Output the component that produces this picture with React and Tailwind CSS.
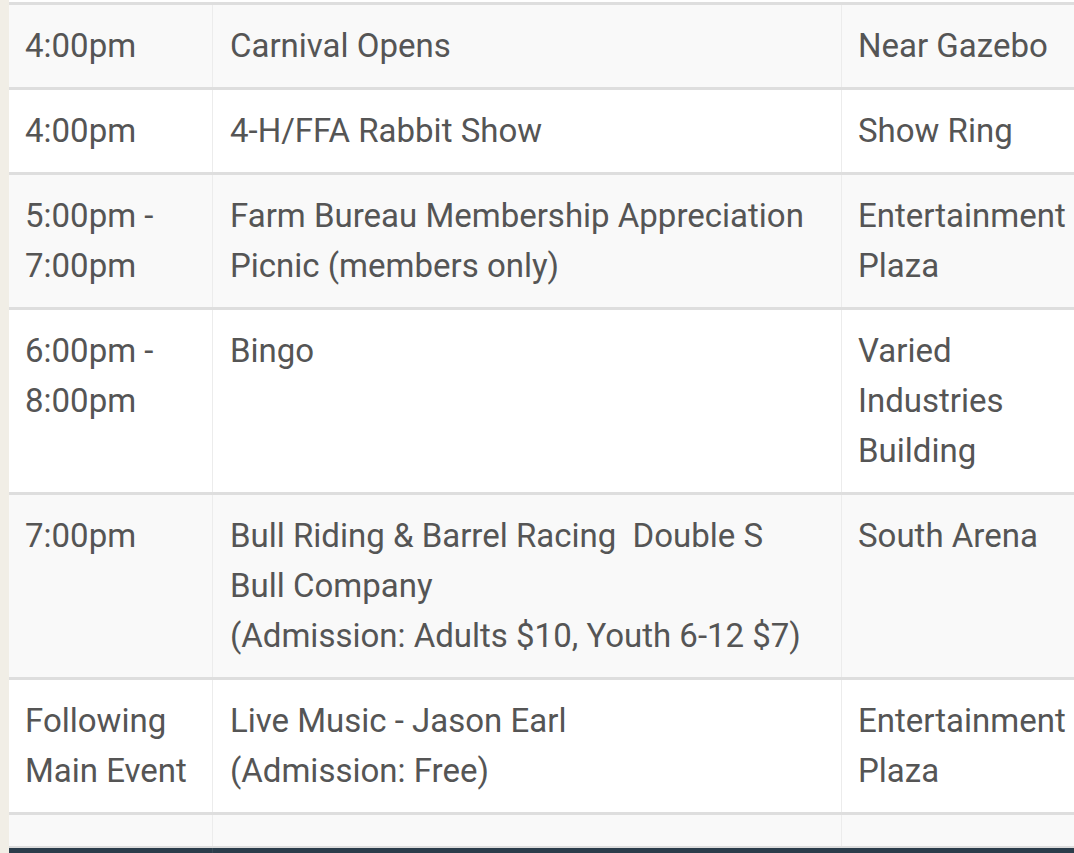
import React from "react";

const rows = [
  { t: ["4:00pm"], e: ["Carnival Opens"], l: ["Near Gazebo"] },
  { t: ["4:00pm"], e: ["4-H/FFA Rabbit Show"], l: ["Show Ring"] },
  { t: ["5:00pm -", "7:00pm"], e: ["Farm Bureau Membership Appreciation", "Picnic (members only)"], l: ["Entertainment", "Plaza"] },
  { t: ["6:00pm -", "8:00pm"], e: ["Bingo"], l: ["Varied", "Industries", "Building"] },
  { t: ["7:00pm"], e: ["Bull Riding & Barrel Racing  Double S", "Bull Company", "(Admission: Adults $10, Youth 6-12 $7)"], l: ["South Arena"] },
  { t: ["Following", "Main Event"], e: ["Live Music - Jason Earl", "(Admission: Free)"], l: ["Entertainment", "Plaza"] },
];

function Lines({ items }) {
  return (
    <>
      {items.map((s, i) => (
        <div key={i} className="whitespace-pre">{s}</div>
      ))}
    </>
  );
}

export default function App() {
  return (
    <div
      className="w-[1074px] h-[853px] overflow-hidden bg-[#f1eee6] flex"
      style={{ fontFamily: "Roboto, 'Liberation Sans', sans-serif" }}
    >
      <div className="w-[9px] shrink-0" />
      <div className="flex-1 min-w-0 flex flex-col bg-white text-[33px] leading-[50px] text-[#555555]">
        <div className="h-[2px] bg-white" />
        {rows.map((r, i) => (
          <div
            key={i}
            className={`grid grid-cols-[204px_629px_1fr] border-t-[3px] border-[#dedede] ${
              i % 2 === 0 ? "bg-[#f9f9f9]" : "bg-white"
            }`}
          >
            <div className="py-4 pl-[16px] border-r border-[#ececec]">
              <Lines items={r.t} />
            </div>
            <div className="py-4 pl-[17px] border-r border-[#ececec]">
              <Lines items={r.e} />
            </div>
            <div className="py-4 pl-[16px] whitespace-nowrap overflow-hidden">
              <Lines items={r.l} />
            </div>
          </div>
        ))}
        <div className="grid grid-cols-[204px_629px_1fr] border-t-[3px] border-[#dedede] bg-[#f9f9f9] h-[34px]">
          <div className="border-r border-[#ececec]" />
          <div className="border-r border-[#ececec]" />
          <div />
        </div>
        <div className="grid grid-cols-[204px_629px_1fr] border-t-[2px] border-[#dcdcdc] bg-[#2b3d4b] flex-1">
          <div className="border-r border-[#3a4b58]" />
          <div />
          <div />
        </div>
      </div>
    </div>
  );
}
